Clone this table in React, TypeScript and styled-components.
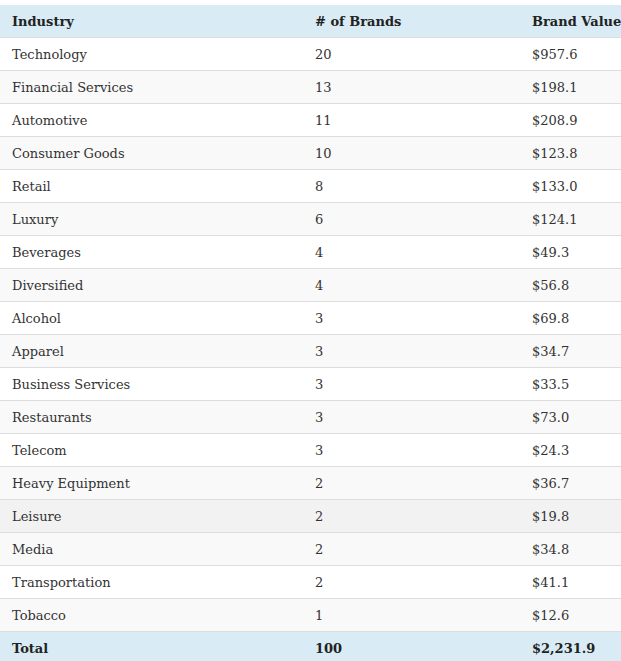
import React from "react";
import styled, { createGlobalStyle } from "styled-components";

const Global = createGlobalStyle`
  html, body { margin: 0; padding: 0; background: #fff; overflow: hidden; }
  body { padding-top: 5px; }
`;

const Table = styled.table`
  border-collapse: collapse;
  width: 640px;
  table-layout: fixed;
  font-family: "DejaVu Serif", "Liberation Serif", serif;
  font-size: 13px;
  color: #333;
`;

const Col = styled.col<{ $w: number }>`
  width: ${(p) => p.$w}px;
`;

const HeadRow = styled.tr`
  background: #d9ecf5;
`;

const Th = styled.th`
  text-align: left;
  font-weight: bold;
  color: #222;
  height: 32px;
  padding: 0 12px;
  border-bottom: 1px solid #ddd;
  white-space: nowrap;
`;

const Row = styled.tr<{ $alt: boolean; $hover?: boolean }>`
  background: ${(p) => (p.$hover ? "#f2f2f2" : p.$alt ? "#f9f9f9" : "#fff")};
`;

const Td = styled.td`
  height: 32px;
  padding: 0 12px;
  border-bottom: 1px solid #ddd;
  white-space: nowrap;
`;

const TotalRow = styled.tr`
  background: #d9ecf5;
  font-weight: bold;
  color: #222;
`;

const data: [string, number, string][] = [
  ["Technology", 20, "$957.6"],
  ["Financial Services", 13, "$198.1"],
  ["Automotive", 11, "$208.9"],
  ["Consumer Goods", 10, "$123.8"],
  ["Retail", 8, "$133.0"],
  ["Luxury", 6, "$124.1"],
  ["Beverages", 4, "$49.3"],
  ["Diversified", 4, "$56.8"],
  ["Alcohol", 3, "$69.8"],
  ["Apparel", 3, "$34.7"],
  ["Business Services", 3, "$33.5"],
  ["Restaurants", 3, "$73.0"],
  ["Telecom", 3, "$24.3"],
  ["Heavy Equipment", 2, "$36.7"],
  ["Leisure", 2, "$19.8"],
  ["Media", 2, "$34.8"],
  ["Transportation", 2, "$41.1"],
  ["Tobacco", 1, "$12.6"],
];

export default function App() {
  return (
    <>
      <Global />
      <Table>
        <colgroup>
          <Col $w={303} />
          <Col $w={217} />
          <Col $w={120} />
        </colgroup>
        <thead>
          <HeadRow>
            <Th>Industry</Th>
            <Th># of Brands</Th>
            <Th>Brand Value</Th>
          </HeadRow>
        </thead>
        <tbody>
          {data.map(([name, n, v], i) => (
            <Row key={name} $alt={i % 2 === 1} $hover={name === "Leisure"}>
              <Td>{name}</Td>
              <Td>{n}</Td>
              <Td>{v}</Td>
            </Row>
          ))}
          <TotalRow>
            <Td>Total</Td>
            <Td>100</Td>
            <Td>$2,231.9</Td>
          </TotalRow>
        </tbody>
      </Table>
    </>
  );
}
